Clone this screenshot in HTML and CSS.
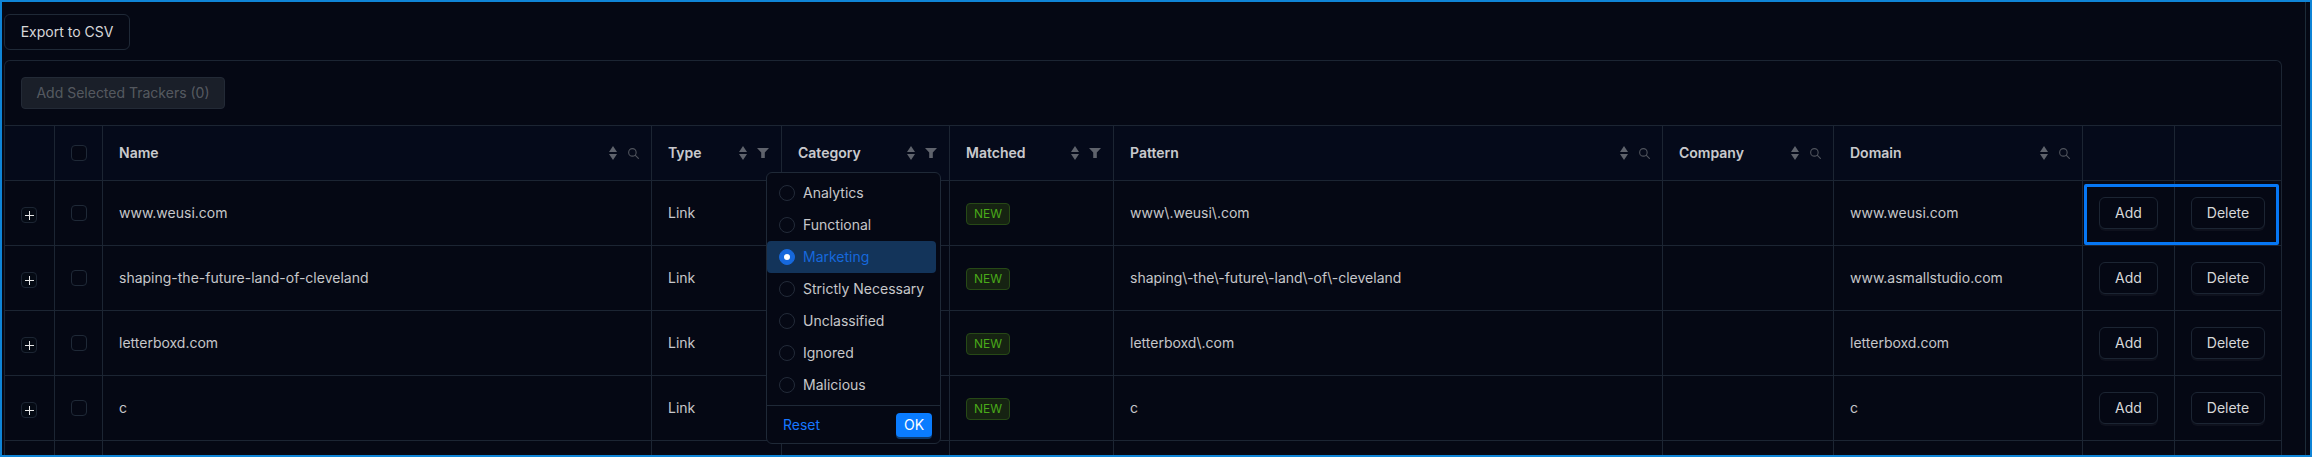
FILE: index.html
```html
<!DOCTYPE html>
<html lang="en">
<head>
<meta charset="utf-8">
<title>Trackers</title>
<link rel="stylesheet" href="styles.css">
</head>
<body>
<svg class="defs" width="0" height="0" aria-hidden="true">
  <symbol id="sort" viewBox="0 0 8 14"><path d="M4 0 8 6H0Z M0 8H8L4 14Z"/></symbol>
  <symbol id="search" viewBox="0 0 10 10"><circle cx="4" cy="4" r="3.4" fill="none" stroke="currentColor"/><path d="M6.5 6.5 9.8 9.8" fill="none" stroke="currentColor"/></symbol>
  <symbol id="filter" viewBox="0 0 12 10"><path d="M0 0H12L7.8 4.6V10H4.2V4.6Z"/></symbol>
</svg>
<main class="frame">
  <div class="content">
    <button class="btn export">Export to CSV</button>
    <section class="panel">
      <div class="toolbar"><button class="btn-disabled">Add Selected Trackers (0)</button></div>
      <table class="grid">
        <colgroup>
          <col class="c-expand"><col class="c-check"><col class="c-name"><col class="c-type"><col class="c-cat"><col class="c-match"><col class="c-pattern"><col class="c-company"><col class="c-domain"><col class="c-add"><col class="c-del">
        </colgroup>
        <thead>
          <tr>
            <th></th>
            <th class="center"><span class="check"></span></th>
            <th><div class="head"><span>Name</span><svg class="sort"><use href="#sort"/></svg><span class="tool"><svg class="i-search"><use href="#search"/></svg></span></div></th>
            <th><div class="head"><span>Type</span><svg class="sort"><use href="#sort"/></svg><span class="tool"><svg class="i-filter"><use href="#filter"/></svg></span></div></th>
            <th><div class="head"><span>Category</span><svg class="sort"><use href="#sort"/></svg><span class="tool"><svg class="i-filter"><use href="#filter"/></svg></span></div></th>
            <th><div class="head"><span>Matched</span><svg class="sort"><use href="#sort"/></svg><span class="tool"><svg class="i-filter"><use href="#filter"/></svg></span></div></th>
            <th><div class="head"><span>Pattern</span><svg class="sort"><use href="#sort"/></svg><span class="tool"><svg class="i-search"><use href="#search"/></svg></span></div></th>
            <th><div class="head"><span>Company</span><svg class="sort"><use href="#sort"/></svg><span class="tool"><svg class="i-search"><use href="#search"/></svg></span></div></th>
            <th><div class="head"><span>Domain</span><svg class="sort"><use href="#sort"/></svg><span class="tool"><svg class="i-search"><use href="#search"/></svg></span></div></th>
            <th></th>
            <th></th>
          </tr>
        </thead>
        <tbody>
          <tr>
            <td class="center"><button class="expand" aria-label="Expand"></button></td>
            <td class="center"><span class="check"></span></td>
            <td>www.weusi.com</td><td>Link</td><td></td><td><span class="tag">NEW</span></td>
            <td>www\.weusi\.com</td><td></td><td>www.weusi.com</td>
            <td class="center"><button class="btn small add">Add</button></td>
            <td class="center"><button class="btn small del">Delete</button></td>
          </tr>
          <tr>
            <td class="center"><button class="expand" aria-label="Expand"></button></td>
            <td class="center"><span class="check"></span></td>
            <td>shaping-the-future-land-of-cleveland</td><td>Link</td><td></td><td><span class="tag">NEW</span></td>
            <td>shaping\-the\-future\-land\-of\-cleveland</td><td></td><td>www.asmallstudio.com</td>
            <td class="center"><button class="btn small add">Add</button></td>
            <td class="center"><button class="btn small del">Delete</button></td>
          </tr>
          <tr>
            <td class="center"><button class="expand" aria-label="Expand"></button></td>
            <td class="center"><span class="check"></span></td>
            <td>letterboxd.com</td><td>Link</td><td></td><td><span class="tag">NEW</span></td>
            <td>letterboxd\.com</td><td></td><td>letterboxd.com</td>
            <td class="center"><button class="btn small add">Add</button></td>
            <td class="center"><button class="btn small del">Delete</button></td>
          </tr>
          <tr>
            <td class="center"><button class="expand" aria-label="Expand"></button></td>
            <td class="center"><span class="check"></span></td>
            <td>c</td><td>Link</td><td></td><td><span class="tag">NEW</span></td>
            <td>c</td><td></td><td>c</td>
            <td class="center"><button class="btn small add">Add</button></td>
            <td class="center"><button class="btn small del">Delete</button></td>
          </tr>
          <tr>
            <td></td><td></td><td></td><td></td><td></td><td></td><td></td><td></td><td></td><td></td><td></td>
          </tr>
        </tbody>
      </table>
      <div class="focus-ring"></div>
      <div class="popover">
        <ul class="options">
          <li class="option"><span class="radio"></span>Analytics</li>
          <li class="option"><span class="radio"></span>Functional</li>
          <li class="option selected"><span class="radio"></span>Marketing</li>
          <li class="option"><span class="radio"></span>Strictly Necessary</li>
          <li class="option"><span class="radio"></span>Unclassified</li>
          <li class="option"><span class="radio"></span>Ignored</li>
          <li class="option"><span class="radio"></span>Malicious</li>
        </ul>
        <div class="pop-foot"><span class="reset">Reset</span><button class="ok">OK</button></div>
      </div>
    </section>
  </div>
  <div class="rail"></div>
</main>
</body>
</html>
```
FILE: styles.css
```css
* { box-sizing: border-box; }
html, body { margin: 0; height: 457px; overflow: hidden; background: #050814; }
.defs { position: absolute; }
.frame {
  height: 457px;
  border: 2px solid #0f84d6;
  background: #050814;
  display: flex;
  overflow: hidden;
  font: 14px/22px Inter, "Liberation Sans", sans-serif;
  color: rgba(255, 255, 255, 0.78);
}
.content { width: 2303px; padding: 12px 0 0 2px; flex: none; }
.rail { flex: 1; border-left: 1px solid #1c2b38; }
button { font: inherit; cursor: pointer; }
.btn {
  display: block;
  background: #050814;
  color: rgba(255, 255, 255, 0.85);
  border: 1px solid #1f2937;
  border-radius: 6px;
}
.export { width: 126px; height: 36px; padding: 0; }
.panel {
  position: relative;
  width: 2278px;
  margin-top: 10px;
  border: 1px solid #1c2533;
  border-bottom: 0;
  border-radius: 6px 6px 0 0;
}
.toolbar { padding: 16px 16px 15px; height: 64px; }
.btn-disabled {
  display: block;
  width: 204px;
  height: 32px;
  padding: 0;
  background: #1a1f29;
  border: 1px solid #232a36;
  border-radius: 4px;
  color: rgba(255, 255, 255, 0.27);
}
.grid { table-layout: fixed; width: 2276px; border-collapse: separate; border-spacing: 0; }
.c-expand { width: 50px; }
.c-check { width: 48px; }
.c-name { width: 549px; }
.c-type { width: 130px; }
.c-cat { width: 168px; }
.c-match { width: 164px; }
.c-pattern { width: 549px; }
.c-company { width: 171px; }
.c-domain { width: 249px; }
.c-add { width: 92px; }
.c-del { width: 106px; }
th, td {
  border-right: 1px solid #1c2533;
  border-bottom: 1px solid #1c2533;
  padding: 0 0 0 16px;
  text-align: left;
}
th:last-child, td:last-child { border-right: 0; }
th {
  height: 56px;
  border-top: 1px solid #1c2533;
  background: #050a1a;
  font-weight: 600;
  color: rgba(255, 255, 255, 0.8);
}
td { height: 65px; }
th.center, td.center { padding: 0; text-align: center; }
.head { display: flex; align-items: center; padding-right: 12px; }
.head span:first-child { flex: 1; }
.sort { width: 8px; height: 14px; fill: #5f636c; flex: none; }
.tool { width: 12px; margin-left: 10px; display: flex; justify-content: center; color: #5f636c; flex: none; }
.i-search { width: 11px; height: 11px; color: #50545d; }
.i-filter { width: 12px; height: 10px; fill: #5f636c; }
.check {
  display: block;
  width: 16px;
  height: 16px;
  margin: 0 auto;
  background: #050814;
  border: 1px solid #1f2937;
  border-radius: 4px;
}
.expand {
  position: relative;
  display: block;
  width: 16px;
  height: 16px;
  margin: 4px 0 0 16px;
  padding: 0;
  background: #050a14;
  border: 1px solid #1c2533;
  border-radius: 4px;
}
.expand::before, .expand::after { content: ""; position: absolute; background: #e6e6e6; }
.expand::before { left: 3px; right: 2px; top: 7px; height: 1px; }
.expand::after { top: 3px; bottom: 2px; left: 7px; width: 1px; }
.tag {
  display: inline-block;
  width: 44px;
  height: 22px;
  border: 1px solid #274916;
  border-radius: 4px;
  background: #162312;
  color: #49aa19;
  font-size: 12px;
  line-height: 20px;
  text-align: center;
  vertical-align: middle;
}
.small { height: 32px; padding: 0; margin: 0 auto; border-color: #1c2533; box-shadow: 0 2px 0 rgba(255, 255, 255, 0.04); }
.add { width: 59px; }
.del { width: 74px; }
.focus-ring {
  position: absolute;
  left: 2079px;
  top: 123px;
  width: 195px;
  height: 61px;
  border: 3px solid #0677f5;
  border-radius: 2px;
  pointer-events: none;
}
.popover {
  position: absolute;
  left: 761px;
  top: 111px;
  width: 175px;
  height: 272px;
  background: #050814;
  border: 1px solid #1f2937;
  border-radius: 6px;
}
.options { list-style: none; margin: 0; padding: 4px 4px 4px 0; height: 233px; border-bottom: 1px solid #1f2937; }
.option { display: flex; align-items: center; gap: 8px; height: 32px; padding-left: 12px; border-radius: 4px; }
.radio { width: 16px; height: 16px; border: 1px solid #232b39; border-radius: 50%; flex: none; }
.selected { background: #13345a; color: #1668dc; }
.selected .radio { background: #1668dc; border-color: #1668dc; position: relative; }
.selected .radio::after { content: ""; position: absolute; left: 4px; top: 4px; width: 6px; height: 6px; border-radius: 50%; background: #fff; }
.pop-foot { display: flex; align-items: center; justify-content: space-between; padding: 7px 8px 0 16px; }
.reset { color: #1677ff; }
.ok {
  width: 36px;
  height: 24px;
  padding: 0;
  background: #0a7cff;
  color: #fff;
  border: 0;
  border-radius: 4px;
  box-shadow: 0 2px 0 #0e3a6b;
}
```
